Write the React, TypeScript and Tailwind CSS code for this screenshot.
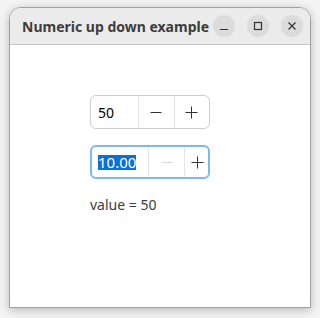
import React, { useState } from 'react'

const font = { fontFamily: '"Noto Sans", "Open Sans", sans-serif' }

const Minus = ({ color }: { color: string }) => (
    <svg width="12" height="12" viewBox="0 0 12 12">
        <path d="M0.5 6.5h11" stroke={color} strokeWidth="1" />
    </svg>
)

const Plus = ({ color }: { color: string }) => (
    <svg width="13" height="13" viewBox="0 0 13 13">
        <path d="M0.5 6.5h12M6.5 0.5v12" stroke={color} strokeWidth="1" />
    </svg>
)

const TitleButton = ({ children }: { children: React.ReactNode }) => (
    <div className="w-[22px] h-[22px] rounded-full bg-[#dcdcdc] flex items-center justify-center">{children}</div>
)

const App = () => {
    const [value] = useState(50)

    return (
        <div className="w-[320px] h-[318px] bg-[#f4f4f4] pt-[7px] pl-[9px]" style={font}>
            <div className="w-[302px] h-[301px] rounded-t-[12px] border border-[#a0a0a0] bg-white flex flex-col overflow-hidden shadow-[0_2px_10px_rgba(0,0,0,0.25)]">
                <div className="h-[37px] shrink-0 bg-[#ebebeb] border-b border-[#c4c4c4] flex items-center pl-[12px] pr-[7px]">
                    <span className="text-[14px] font-bold text-[#3d3d3d] flex-1 whitespace-nowrap">Numeric up down example</span>
                    <div className="flex items-center gap-[12px]">
                        <TitleButton>
                            <svg width="10" height="10" viewBox="0 0 10 10">
                                <path d="M1 8.5h8" stroke="#333" strokeWidth="1.2" />
                            </svg>
                        </TitleButton>
                        <TitleButton>
                            <svg width="10" height="10" viewBox="0 0 10 10">
                                <rect x="1.5" y="1.5" width="7" height="7" fill="none" stroke="#333" strokeWidth="1.2" />
                            </svg>
                        </TitleButton>
                        <TitleButton>
                            <svg width="10" height="10" viewBox="0 0 10 10">
                                <path d="M1.5 1.5l7 7M8.5 1.5l-7 7" stroke="#333" strokeWidth="1.2" />
                            </svg>
                        </TitleButton>
                    </div>
                </div>
                <div className="flex flex-col pl-[80px] pt-[50px]">
                    <div className="w-[120px] h-[34px] rounded-[6px] border border-[#cdcdcd] flex">
                        <div className="w-[48px] flex items-center pl-[7px] text-[14px] text-black">{value}</div>
                        <div className="w-[36px] border-l border-[#e4e4e4] flex items-center justify-center">
                            <Minus color="#333" />
                        </div>
                        <div className="w-[36px] border-l border-[#e4e4e4] flex items-center justify-center">
                            <Plus color="#333" />
                        </div>
                    </div>
                    <div className="mt-[16px] w-[120px] h-[34px] rounded-[6px] border-2 border-[#7db8f2] flex overflow-hidden">
                        <div className="w-[56px] shrink-0 flex items-center pl-[6px] text-[15px]">
                            <span className="bg-[#0b6fd6] text-white leading-[15px]">10.00</span>
                        </div>
                        <div className="w-[36px] shrink-0 border-l border-[#e4e4e4] flex items-center justify-center">
                            <Minus color="#d6d6d6" />
                        </div>
                        <div className="w-[26px] shrink-0 border-l border-[#e4e4e4] flex items-center justify-center">
                            <Plus color="#333" />
                        </div>
                    </div>
                    <div className="mt-[15px] text-[14px] text-[#3d3d3d]">value = {value}</div>
                </div>
            </div>
        </div>
    )
}

export default App
